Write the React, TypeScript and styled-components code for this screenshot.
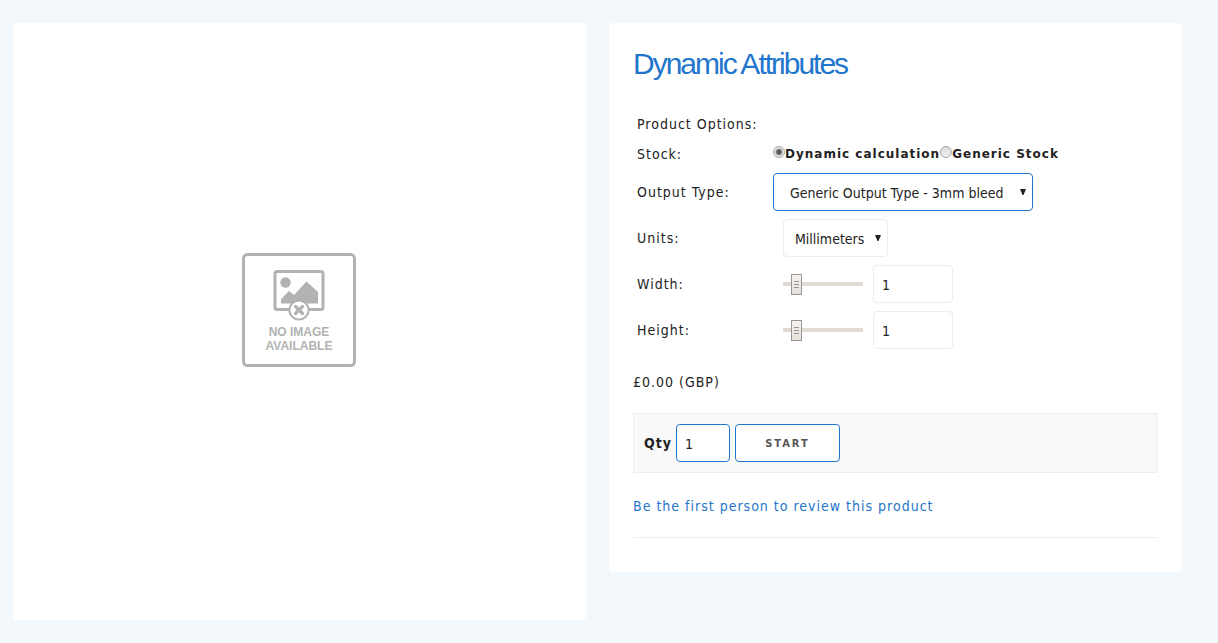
import React, { useState } from "react";
import styled, { createGlobalStyle } from "styled-components";

const blue = "#1f76cc";
const ink = "#222222";
const line = "#ededed";
const bodyFont = `"DejaVu Sans Condensed", "DejaVu Sans", sans-serif`;

const GlobalStyle = createGlobalStyle`
  *, *::before, *::after { box-sizing: border-box; }
  body {
    margin: 0;
    background: #f2f8fc;
    color: ${ink};
    font-family: ${bodyFont};
    font-size: 14px;
    line-height: 20px;
    letter-spacing: 1px;
  }
`;

const Page = styled.main`
  display: grid;
  grid-template-columns: 1fr 1fr;
  align-items: start;
  gap: 23px;
  padding: 23px 36px 23px 13px;
`;

const Card = styled.section`
  background: #ffffff;
  border-radius: 4px;
`;

const ImageCard = styled(Card)`
  padding-bottom: 24px;
`;

const Picture = styled.div`
  display: flex;
  align-items: center;
  justify-content: center;
  aspect-ratio: 1;
`;

const DetailsCard = styled(Card)`
  padding: 24px 24px 34px;
`;

const Title = styled.h1`
  margin: 0 0 28px;
  color: ${blue};
  font: 400 30px/34px "Liberation Sans", Arial, sans-serif;
  letter-spacing: -2px;
`;

const Options = styled.form`
  display: flex;
  flex-direction: column;
`;

const Row = styled.div`
  display: grid;
  grid-template-columns: 136px 1fr;
  align-items: center;
  min-height: 30px;
  padding: 4px;
`;

const RowLabel = styled.label``;

const Controls = styled.div<{ $indent?: boolean }>`
  display: flex;
  align-items: center;
  gap: 10px;
  padding-left: ${(p) => (p.$indent ? 10 : 0)}px;
`;

const RadioGroup = styled.div`
  display: flex;
  align-items: center;
`;

const RadioLabel = styled.label`
  display: flex;
  align-items: center;
  font: 700 12px/20px "DejaVu Sans", sans-serif;
`;

const Radio = styled.input`
  appearance: none;
  width: 12px;
  height: 12px;
  margin: 0 0 4px;
  border: 1px solid #a6a6a6;
  border-radius: 50%;
  background: linear-gradient(#dcdcdc, #efefef);
  &:checked {
    background: radial-gradient(circle, #5a5a5a 0 2px, #e6e6e6 4px);
  }
`;

const SelectBox = styled.span<{ $width: number }>`
  position: relative;
  display: block;
  width: ${(p) => p.$width}px;
`;

const Select = styled.select<{ $active?: boolean }>`
  appearance: none;
  width: 100%;
  height: 38px;
  padding: 2px 18px 0 ${(p) => (p.$active ? 16 : 11)}px;
  border: 1px solid ${(p) => (p.$active ? blue : line)};
  border-radius: 4px;
  background: #ffffff;
  color: ${ink};
  font: 14px/20px ${bodyFont};
`;

const Arrow = styled.svg`
  position: absolute;
  top: 16px;
  right: 7px;
  pointer-events: none;
`;

const Slider = styled.input`
  appearance: none;
  width: 80px;
  height: 22px;
  margin: 0;
  background: linear-gradient(#e0dcd5, #e0dcd5) center / 100% 4px no-repeat;
  &::-webkit-slider-thumb {
    appearance: none;
    width: 11px;
    height: 21px;
    border: 1px solid #9b958e;
    background:
      linear-gradient(#9b958e, #9b958e) 2px 6px / 5px 1px no-repeat,
      linear-gradient(#9b958e, #9b958e) 2px 9px / 5px 1px no-repeat,
      linear-gradient(#9b958e, #9b958e) 2px 12px / 5px 1px no-repeat,
      linear-gradient(#f5f3f0, #e5e1dc);
  }
`;

const TextInput = styled.input<{ $active?: boolean }>`
  width: ${(p) => (p.$active ? 54 : 80)}px;
  height: 38px;
  padding: 2px 8px 0;
  border: 1px solid ${(p) => (p.$active ? blue : line)};
  border-radius: 4px;
  background: #ffffff;
  color: ${ink};
  font: 14px/20px ${bodyFont};
`;

const Price = styled.p`
  margin: 19px 0 21px;
`;

const BuyBar = styled.form`
  display: flex;
  align-items: center;
  padding: 10px;
  border: 1px solid ${line};
  background: #f9f9f9;
`;

const QtyLabel = styled.label`
  margin-right: 4px;
  font-weight: 700;
`;

const StartButton = styled.button`
  width: 105px;
  height: 38px;
  margin-left: 5px;
  padding: 2px 0 0;
  border: 1px solid ${blue};
  border-radius: 4px;
  background: #ffffff;
  color: #555555;
  font: 700 11px/20px ${bodyFont};
  letter-spacing: 2px;
`;

const Review = styled.p`
  margin: 23px 0 21px;
`;

const ReviewLink = styled.a`
  color: ${blue};
  text-decoration: none;
`;

const Divider = styled.hr`
  margin: 0;
  border: 0;
  border-top: 1px solid ${line};
`;

function NoImage() {
  return (
    <svg width="115" height="115" viewBox="0 -1 115 115" role="img" aria-label="No image available">
      <rect x="1.5" y="1.5" width="111" height="111" rx="4" fill="#fff" stroke="#b1b3b2" strokeWidth="3" />
      <rect x="33" y="18.5" width="48" height="38" rx="2" fill="#fff" stroke="#b1b3b2" strokeWidth="3" />
      <circle cx="43.5" cy="29.5" r="5.2" fill="#b1b3b2" />
      <path d="M39 50.500V46L47 38L52 42L64.500 28.500L76 39V50.500Z" fill="#b1b3b2" />
      <circle cx="57" cy="57" r="9.6" fill="#fff" stroke="#b1b3b2" strokeWidth="2" />
      <path d="M53.500 53.500L60.500 60.500M60.500 53.500L53.500 60.500" stroke="#b1b3b2" strokeWidth="3.2" strokeLinecap="round" />
      <g fill="#b1b3b2" fontFamily="Liberation Sans, Arial, sans-serif" fontWeight="700" fontSize="12" letterSpacing="0" textAnchor="middle">
        <text x="57" y="83">NO IMAGE</text>
        <text x="57" y="97">AVAILABLE</text>
      </g>
    </svg>
  );
}

function SelectArrow() {
  return (
    <Arrow width="6" height="6" viewBox="0 0 6 6" aria-hidden="true">
      <path d="M0 0H6L3.500 6H2.500Z" fill={ink} />
    </Arrow>
  );
}

function Dimension({ id, label }: { id: string; label: string }) {
  const [position, setPosition] = useState(8);
  const [value, setValue] = useState("1");
  return (
    <Row>
      <RowLabel htmlFor={id}>{label}</RowLabel>
      <Controls $indent>
        <Slider
          type="range"
          min={0}
          max={69}
          value={position}
          aria-label={`${label} slider`}
          onChange={(e) => {
            setPosition(Number(e.target.value));
            setValue(String(Math.max(1, Number(e.target.value) - 7)));
          }}
        />
        <TextInput id={id} type="text" value={value} onChange={(e) => setValue(e.target.value)} />
      </Controls>
    </Row>
  );
}

export default function App() {
  return (
    <>
      <GlobalStyle />
      <Page>
        <ImageCard>
          <Picture>
            <NoImage />
          </Picture>
        </ImageCard>
        <DetailsCard>
          <Title>Dynamic Attributes</Title>
          <Options>
            <Row>
              <span>Product Options:</span>
            </Row>
            <Row>
              <span id="stock-label">Stock:</span>
              <RadioGroup role="radiogroup" aria-labelledby="stock-label">
                <RadioLabel>
                  <Radio type="radio" name="stock" defaultChecked />
                  Dynamic calculation
                </RadioLabel>
                <RadioLabel>
                  <Radio type="radio" name="stock" />
                  Generic Stock
                </RadioLabel>
              </RadioGroup>
            </Row>
            <Row>
              <RowLabel htmlFor="output">Output Type:</RowLabel>
              <Controls>
                <SelectBox $width={260}>
                  <Select id="output" $active>
                    <option>Generic Output Type - 3mm bleed</option>
                  </Select>
                  <SelectArrow />
                </SelectBox>
              </Controls>
            </Row>
            <Row>
              <RowLabel htmlFor="units">Units:</RowLabel>
              <Controls $indent>
                <SelectBox $width={105}>
                  <Select id="units">
                    <option>Millimeters</option>
                  </Select>
                  <SelectArrow />
                </SelectBox>
              </Controls>
            </Row>
            <Dimension id="width" label="Width:" />
            <Dimension id="height" label="Height:" />
          </Options>
          <Price>£0.00 (GBP)</Price>
          <BuyBar onSubmit={(e) => e.preventDefault()}>
            <QtyLabel htmlFor="qty">Qty</QtyLabel>
            <TextInput id="qty" type="text" defaultValue="1" $active />
            <StartButton type="submit">START</StartButton>
          </BuyBar>
          <Review>
            <ReviewLink href="#review">Be the first person to review this product</ReviewLink>
          </Review>
          <Divider />
        </DetailsCard>
      </Page>
    </>
  );
}
